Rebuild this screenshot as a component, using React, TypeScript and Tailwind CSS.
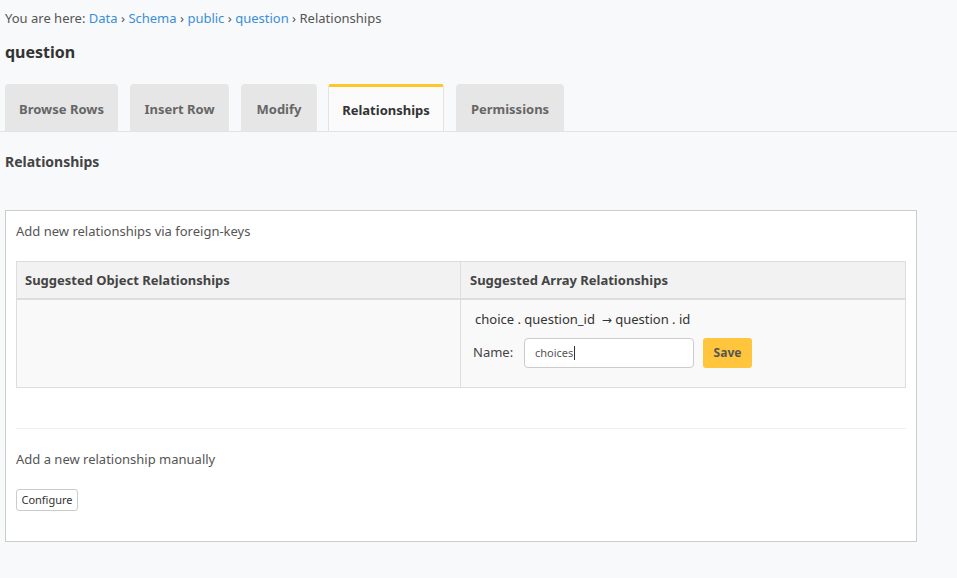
import React from "react";

const tabs = [
  { label: "Browse Rows", w: "w-[113px]", m: "" },
  { label: "Insert Row", w: "w-[99px]", m: "ml-[12px]" },
  { label: "Modify", w: "w-[76px]", m: "ml-[12px]" },
  { label: "Relationships", w: "w-[116px]", m: "ml-[11px]", active: true },
  { label: "Permissions", w: "w-[108px]", m: "ml-[12px]" },
];

export default function App() {
  return (
    <div className="min-h-[578px] bg-[#f8f9fa] font-['Noto_Sans',sans-serif] text-[#333]">
      <div className="pl-[5px] pt-[9px] text-[13px] leading-[18px] text-[#555]">
        You are here: <span className="text-[#3a8fd9]">Data</span> ›{" "}
        <span className="text-[#3a8fd9]">Schema</span> ›{" "}
        <span className="text-[#3a8fd9]">public</span> ›{" "}
        <span className="text-[#3a8fd9]">question</span> › Relationships
      </div>
      <div className="pl-[5px] pt-[14px] text-[16px] font-bold leading-[22px] text-[#333]">question</div>
      <div className="mt-[21px] flex items-end border-b border-[#e3e3e3] pl-[5px]">
        {tabs.map((t) =>
          t.active ? (
            <div
              key={t.label}
              className={`${t.w} ${t.m} flex h-[47px] items-center justify-center rounded-t-[3px] border-x border-t-[3px] border-x-[#e3e3e3] border-t-[#ffc627] bg-[#fbfbfc] pt-[3px] text-[13px] font-bold text-[#333]`}
            >
              {t.label}
            </div>
          ) : (
            <div
              key={t.label}
              className={`${t.w} ${t.m} flex h-[47px] items-center justify-center rounded-t-[4px] bg-[#e6e6e6] pt-[5px] text-[13px] font-bold text-[#666]`}
            >
              {t.label}
            </div>
          )
        )}
      </div>
      <div className="pl-[5px] pt-[20px] text-[14px] font-bold leading-[20px] text-[#444]">Relationships</div>
      <div className="ml-[5px] mt-[38px] w-[912px] border border-[#cccccc] bg-white px-[10px] pb-[30px] pt-[11px]">
        <div className="text-[13px] leading-[18px] text-[#555]">Add new relationships via foreign-keys</div>
        <div className="mt-[21px] border border-[#dddddd]">
          <div className="grid grid-cols-2 border-b-2 border-[#dddddd] bg-[#f2f2f2]">
            <div className="flex h-[36px] items-center border-r border-[#dddddd] pl-[8px] pt-[2px] text-[13px] font-bold text-[#444]">
              Suggested Object Relationships
            </div>
            <div className="flex h-[36px] items-center pl-[9px] pt-[2px] text-[13px] font-bold text-[#444]">
              Suggested Array Relationships
            </div>
          </div>
          <div className="grid grid-cols-2 bg-[#f9f9f9]">
            <div className="h-[87px] border-r border-[#dddddd]"></div>
            <div className="pl-[14px] pt-[9px]">
              <div className="text-[13px] leading-[20px] text-[#333]">
                choice . question_id &nbsp;<span className="font-['DejaVu_Sans',sans-serif] text-[12px]">→</span> question . id
              </div>
              <div className="mt-[8px] flex items-center">
                <span className="ml-[-2px] w-[51px] text-[13px] text-[#444]">Name:</span>
                <div className="flex h-[30px] w-[170px] items-center rounded-[4px] border border-[#cccccc] bg-white pl-[10px] text-[11px] text-[#555]">
                  choices<span className="ml-[1px] inline-block h-[14px] w-px bg-[#333]"></span>
                </div>
                <div className="ml-[9px] flex h-[30px] w-[49px] items-center justify-center rounded-[3px] bg-[#fec53d] text-[12px] font-bold text-[#555]">
                  Save
                </div>
              </div>
            </div>
          </div>
        </div>
        <div className="mt-[40px] border-t border-[#eeeeee]"></div>
        <div className="pt-[21px] text-[13px] leading-[18px] text-[#555]">Add a new relationship manually</div>
        <div className="mt-[21px] flex h-[22px] w-[62px] items-center justify-center rounded-[3px] border border-[#cccccc] bg-white text-[11px] text-[#333]">
          Configure
        </div>
      </div>
    </div>
  );
}
